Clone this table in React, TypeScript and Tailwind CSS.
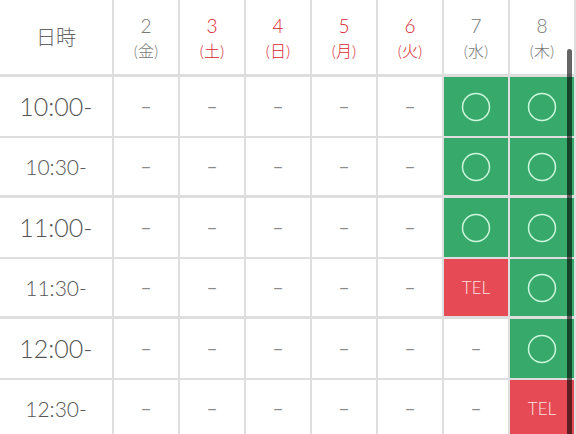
import React from "react";

type Slot = "none" | "ok" | "tel";

const days = [
  { d: "2", w: "金", red: false },
  { d: "3", w: "土", red: true },
  { d: "4", w: "日", red: true },
  { d: "5", w: "月", red: true },
  { d: "6", w: "火", red: true },
  { d: "7", w: "水", red: false },
  { d: "8", w: "木", red: false },
];

const rows: { time: string; hour: boolean; slots: Slot[] }[] = [
  { time: "10:00-", hour: true, slots: ["none", "none", "none", "none", "none", "ok", "ok"] },
  { time: "10:30-", hour: false, slots: ["none", "none", "none", "none", "none", "ok", "ok"] },
  { time: "11:00-", hour: true, slots: ["none", "none", "none", "none", "none", "ok", "ok"] },
  { time: "11:30-", hour: false, slots: ["none", "none", "none", "none", "none", "tel", "ok"] },
  { time: "12:00-", hour: true, slots: ["none", "none", "none", "none", "none", "none", "ok"] },
  { time: "12:30-", hour: false, slots: ["none", "none", "none", "none", "none", "none", "tel"] },
];

function Cell({ slot }: { slot: Slot }) {
  if (slot === "ok") {
    return (
      <div className="flex h-full w-[66px] shrink-0 items-center justify-center border-r-2 border-[#dedede] bg-[#37aa6b]">
        <svg width="30" height="30" viewBox="0 0 30 30">
          <circle cx="15" cy="15" r="13.5" fill="none" stroke="#cdf7dc" strokeWidth="1.5" />
        </svg>
      </div>
    );
  }
  if (slot === "tel") {
    return (
      <div className="flex h-full w-[66px] shrink-0 items-center justify-center border-r-2 border-[#dedede] bg-[#e64b55] text-[17px] font-light text-[#fbe4e5]">
        TEL
      </div>
    );
  }
  return (
    <div className="flex h-full w-[66px] shrink-0 items-center justify-center border-r-2 border-[#dedede] text-[19px] text-[#8a8a8a]">
      –
    </div>
  );
}

export default function App() {
  return (
    <div className="relative h-[434px] w-[576px] overflow-hidden bg-white font-['Lato','Noto_Sans_CJK_JP',sans-serif]">
      <div className="flex flex-col">
        <div className="flex h-[77px] border-b-[3px] border-[#dedede]">
          <div className="flex h-full w-[114px] shrink-0 items-center justify-center border-r-2 border-[#dedede] text-[20px] font-light text-[#666]">
            日時
          </div>
          {days.map((day) => (
            <div
              key={day.d}
              className={`flex h-full w-[66px] shrink-0 flex-col items-center justify-center gap-[8px] border-r-2 border-[#dedede] leading-none font-light ${
                day.red ? "text-[#d7262f]" : "text-[#777]"
              }`}
            >
              <span className="text-[19px]">{day.d}</span>
              <span className="text-[16px]">({day.w})</span>
            </div>
          ))}
        </div>

        {rows.map((r, i) => (
          <div
            key={r.time}
            className={`flex ${
              i % 2 === 0 ? "h-[61px] border-b-2" : "h-[60px] border-b-[3px]"
            } border-[#dedede]`}
          >
            <div
              className={`flex h-full w-[114px] shrink-0 items-center justify-center border-r-2 border-[#dedede] font-light text-[#555] ${
                r.hour ? "text-[25px]" : "text-[21px]"
              }`}
            >
              {r.time}
            </div>
            {r.slots.map((s, j) => (
              <Cell key={j} slot={s} />
            ))}
          </div>
        ))}
      </div>

      {/* overlay scrollbar */}
      <div className="absolute left-[567px] top-[49px] h-[400px] w-[5px] rounded-full bg-black/60" />
    </div>
  );
}
